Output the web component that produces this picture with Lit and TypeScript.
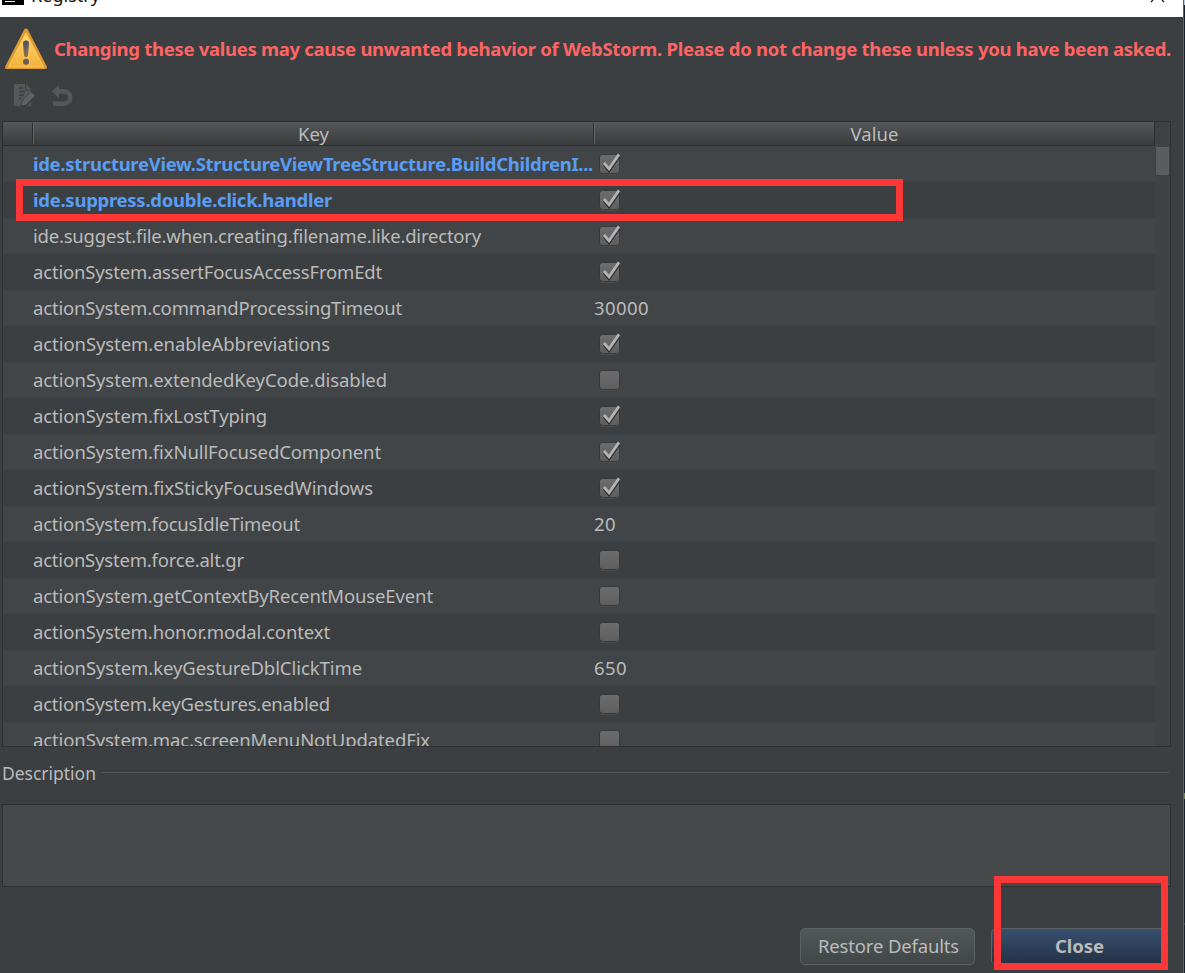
import { LitElement, html, css, svg, nothing } from "lit";
import { customElement, property } from "lit/decorators.js";

/** A single line of text whose tracking is adjusted so it spans `width` pixels. */
@customElement("fit-text")
class FitText extends LitElement {
  @property() text = "";
  @property({ type: Number }) width = 0;
  static styles = css`
    :host { display: inline-block; white-space: pre; }
  `;
  updated() {
    const el = this.renderRoot.querySelector("span") as HTMLElement;
    el.style.letterSpacing = "0px";
    const natural = el.getBoundingClientRect().width;
    if (this.width) el.style.letterSpacing = `${(this.width - natural) / this.text.length}px`;
  }
  render() {
    return html`<span>${this.text}</span>`;
  }
}

@customElement("check-mark")
class CheckMark extends LitElement {
  @property({ type: Boolean }) checked = false;
  static styles = css`
    :host { display: block; width: 24px; height: 24px; }
    svg { display: block; }
  `;
  render() {
    return html`<svg width="24" height="24" viewBox="0 0 24 24">
      <defs><linearGradient id="g" x1="0" y1="0" x2="0" y2="1">
        <stop offset="0" stop-color="#6c6c6c"></stop><stop offset="1" stop-color="#5e5e5e"></stop>
      </linearGradient></defs>
      <rect x="1.5" y="3.5" width="20" height="19" rx="3" fill="none" stroke="#4b4d4e"></rect>
      <rect x="1.5" y="2.5" width="20" height="19" rx="3" fill="url(#g)" stroke="#373839"></rect>
      ${this.checked
        ? svg`<path d="M6.2 12.8L11 18.5L21 4.5" fill="none" stroke="#303030" stroke-width="3"/>
              <path d="M6 11L11 16.8L21 2.4" fill="none" stroke="#b4b4b4" stroke-width="2.8"/>`
        : nothing}
    </svg>`;
  }
}

interface Row { key: string; width: number; value: boolean | string; valueWidth?: number; changed?: boolean; }

const ROWS: Row[] = [
  { key: "ide.structureView.StructureViewTreeStructure.BuildChildrenI...", width: 560, value: true, changed: true },
  { key: "ide.suppress.double.click.handler", width: 299, value: true, changed: true },
  { key: "ide.suggest.file.when.creating.filename.like.directory", width: 448, value: true },
  { key: "actionSystem.assertFocusAccessFromEdt", width: 349, value: true },
  { key: "actionSystem.commandProcessingTimeout", width: 369, value: "30000", valueWidth: 55 },
  { key: "actionSystem.enableAbbreviations", width: 297, value: true },
  { key: "actionSystem.extendedKeyCode.disabled", width: 354, value: false },
  { key: "actionSystem.fixLostTyping", width: 234, value: true },
  { key: "actionSystem.fixNullFocusedComponent", width: 348, value: true },
  { key: "actionSystem.fixStickyFocusedWindows", width: 340, value: true },
  { key: "actionSystem.focusIdleTimeout", width: 267, value: "20", valueWidth: 22 },
  { key: "actionSystem.force.alt.gr", width: 211, value: false },
  { key: "actionSystem.getContextByRecentMouseEvent", width: 400, value: false },
  { key: "actionSystem.honor.modal.context", width: 297, value: false },
  { key: "actionSystem.keyGestureDblClickTime", width: 329, value: "650", valueWidth: 33 },
  { key: "actionSystem.keyGestures.enabled", width: 297, value: false },
  { key: "actionSystem.mac.screenMenuNotUpdatedFix", width: 397, value: false },
];

@customElement("app-root")
class AppRoot extends LitElement {
  static styles = css`
    :host {
      display: block; position: relative; width: 1185px; height: 973px; overflow: hidden;
      background: #3c3f41; color: #bbbbbb;
      font: 18.5px/24px "Noto Sans", "Open Sans", sans-serif;
    }
    * { box-sizing: border-box; }
    .shell { display: grid; grid-template-columns: 1183px 1px 1px; height: 973px; }
    .edge { background: #0d75d0; }
    .outside { background: linear-gradient(#b8cde0 5px, #17202a 5px 793px, #718052 793px 799px, #17202a 799px 923px, #35404a 923px 925px, #17202a 925px); }
    .window { display: flex; flex-direction: column; min-width: 0; }
    .title { height: 17px; flex: none; background: #fff; color: #111; display: flex; overflow: hidden; }
    .title svg { flex: none; }
    .name { margin: -17px 0 0 7px; height: 30px; font-size: 18px; }
    .grow { flex: 1; }
    .warning { height: 63px; flex: none; display: flex; align-items: center; padding: 1px 0 0 4px; color: #ff6464; font-weight: 700; }
    .warning svg { flex: none; margin-right: 6px; }
    .tools { height: 41px; flex: none; padding: 4px 0 0 12px; display: flex; gap: 14px; }
    .table { width: 1169px; height: 626px; flex: none; margin-left: 2px; border: 1px solid #2e3031; display: grid; grid-template-columns: 1152px 15px; overflow: hidden; }
    .grid { height: 624px; overflow: hidden; }
    .head { display: grid; grid-template-columns: 30px 561px 561px; height: 24px; background: linear-gradient(#54585a, #393b3c); border-bottom: 1px solid #2b2d2e; border-right: 1px solid #2b2d2e; text-align: center; }
    .head > div { position: relative; line-height: 24px; }
    .head > div + div::before { content: ""; position: absolute; left: -1px; top: 1px; width: 2px; height: 21px; background: linear-gradient(90deg, #2b2d2e 50%, #626566 50%); }
    .row { display: grid; grid-template-columns: 561px 561px; padding-left: 30px; height: 36px; align-items: center; background: #414547; }
    .row:nth-child(odd) { background: #3c3f41; }
    .changed { color: #589df6; font-weight: 700; }
    .row > div { white-space: nowrap; height: 24px; }
    .check { padding-left: 4px; }
    .scroll { background: #3f4244; padding: 25px 1px 0; }
    .thumb { height: 28px; width: 13px; background: #5a5d5e; }
    .desc { display: flex; align-items: center; margin-top: 13px; height: 26px; flex: none; padding-left: 2px; font-size: 17.5px; }
    .rule { height: 1px; width: 1067px; background: #555555; margin: -1px 0 0 6px; }
    .box { width: 1169px; height: 83px; flex: none; margin: 18px 0 0 2px; border: 1px solid #2e3031; background: #45494a; }
    .buttons { display: flex; gap: 16px; padding: 41px 0 0 800px; }
    .button { height: 37px; border: 1px solid #5e6162; border-radius: 5px; background: linear-gradient(#525758, #414646); display: flex; align-items: center; justify-content: center; width: 175px; flex: none; padding: 0 0 1px 2px; }
    .primary { background: linear-gradient(#365070, #233145); font-weight: 700; width: 176px; padding-left: 1px; }
    .mark { position: absolute; border: 7px solid #fb3838; }
    .mark-row { left: 16px; top: 179px; width: 887px; height: 42px; }
    .mark-close { left: 994px; top: 876px; width: 174px; height: 94px; }
  `;

  private cell(row: Row) {
    return typeof row.value === "boolean"
      ? html`<div class="check"><check-mark ?checked=${row.value}></check-mark></div>`
      : html`<div><fit-text .text=${row.value} .width=${row.valueWidth ?? 0}></fit-text></div>`;
  }

  render() {
    return html`
      <div class="shell">
        <div class="window">
          <div class="title">
            <svg width="24" height="6" viewBox="0 0 24 6"><path d="M2 0H24V5H2Z" fill="#000"/><path d="M5 1H15V2H5Z" fill="#fff"/></svg>
            <div class="name"><fit-text text="Registry" width="69"></fit-text></div>
            <div class="grow"></div>
            <svg width="34" height="4" viewBox="0 0 34 4"><path d="M4 0L2 2M13 0L15 2" stroke="#111" stroke-width="1.2"/></svg>
          </div>
          <div class="warning">
            <svg width="44" height="42" viewBox="0 0 44 42">
              <defs>
                <linearGradient id="w" x1="0" y1="0" x2="0" y2="1"><stop offset="0" stop-color="#ffd768"/><stop offset="1" stop-color="#f6b13c"/></linearGradient>
                <linearGradient id="b" x1="0" y1="0" x2="0" y2="1"><stop offset="0" stop-color="#514e66"/><stop offset="1" stop-color="#8d7550"/></linearGradient>
              </defs>
              <path d="M20.2 1.6Q22-.4 23.8 1.6L42.8 38.5Q43.3 41 41.5 41H2.5Q.7 41 1.2 38.5Z" fill="#dc9a30"/>
              <path d="M22 5L39.6 39H4.4Z" fill="url(#w)" stroke="#ffd06b" stroke-width=".8"/>
              <path d="M19 15.5Q19 12.5 22 12.5T25 15.5L23.9 28Q22 30.5 20.1 28Z" fill="url(#b)"/>
              <circle cx="22" cy="33.8" r="3" fill="#66595d"/>
            </svg>
            <fit-text text="Changing these values may cause unwanted behavior of WebStorm. Please do not change these unless you have been asked." width="1117"></fit-text>
          </div>
          <div class="tools">
            <svg width="24" height="24" viewBox="0 0 24 24">
              <path d="M2 0H14L19 5V8L9 19V22H2Z" fill="#555758"/>
              <path d="M13.5 0V6H19" fill="none" stroke="#3c3f41" stroke-width="1.2"/>
              <path d="M7 4H11M7 7.5H13M7 11H12M7 14.5H9" stroke="#3c3f41" stroke-width="1.4"/>
              <path d="M10 17L18.5 7.5L23.3 11.5L14 21L9 22Z" fill="#5f6162" stroke="#3c3f41" stroke-width=".8"/>
              <path d="M15 22L19 18V22Z" fill="#555758"/>
            </svg>
            <svg width="24" height="24" viewBox="0 0 24 24">
              <path d="M1.5 7.5L9 1V5H14Q22.5 6 22.5 13.5T14 22H3V17.5H13Q18 17.5 18 13.5T13 9.8H9V14Z" fill="#555758"/>
            </svg>
          </div>
          <div class="table">
            <div class="grid">
              <div class="head"><div></div><div><fit-text text="Key" width="31"></fit-text></div><div><fit-text text="Value" width="48"></fit-text></div></div>
              ${ROWS.map((row) => html`<div class="row">
                <div class=${row.changed ? "changed" : ""}><fit-text .text=${row.key} .width=${row.width}></fit-text></div>
                ${this.cell(row)}
              </div>`)}
            </div>
            <div class="scroll"><div class="thumb"></div></div>
          </div>
          <div class="desc"><fit-text text="Description" width="94"></fit-text><div class="rule"></div></div>
          <div class="box"></div>
          <div class="buttons">
            <div class="button"><fit-text text="Restore Defaults" width="141"></fit-text></div>
            <div class="button primary"><fit-text text="Close" width="49"></fit-text></div>
          </div>
        </div>
        <div class="edge"></div>
        <div class="outside"></div>
      </div>
      <div class="mark mark-row"></div>
      <div class="mark mark-close"></div>
    `;
  }
}
